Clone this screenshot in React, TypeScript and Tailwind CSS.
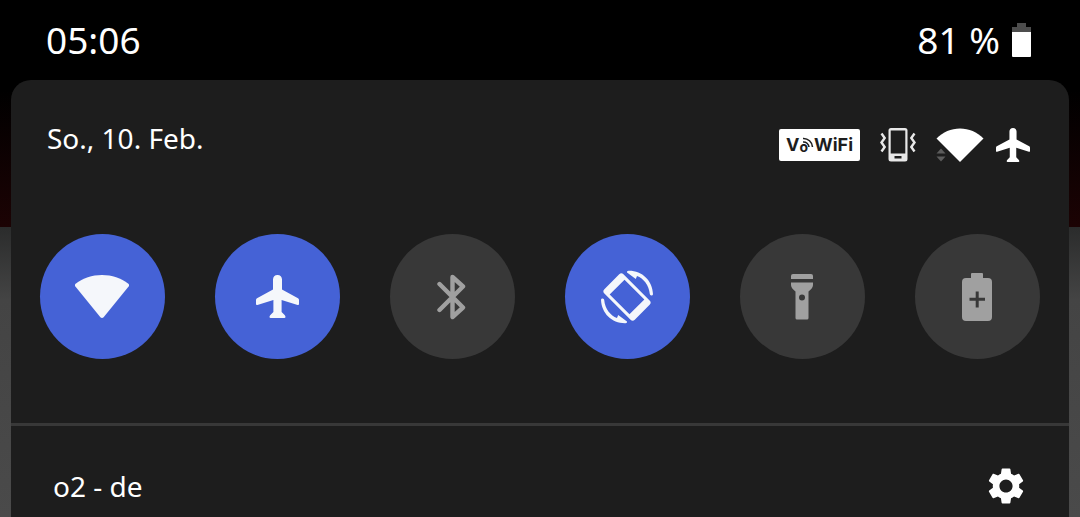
import React from 'react'
import { MdSettings } from 'react-icons/md'
import { clsx } from 'clsx'

interface IconProps {
  className?: string
}

const PlaneIcon = ({ className }: IconProps) => (
  <svg viewBox="0 0 43 43" fill="currentColor" className={className} aria-hidden="true">
    <path d="M21.5 0C24.3 0 26 2 26 4.5V14.5L42 23.2Q43 23.8 43 25V29Q43 30.4 41.6 30L25.6 25V37L28.6 40Q29.5 41 29.5 42Q29.5 43 28.3 43H14.7Q13.5 43 13.5 42Q13.5 41 14.4 40L17.4 37V25L1.4 30Q0 30.4 0 29V25Q0 23.8 1 23.2L17 14.5V4.5C17 2 18.7 0 21.5 0Z" />
  </svg>
)

const WifiIcon = ({ className }: IconProps) => (
  <svg viewBox="0 0 54 43" fill="currentColor" className={className} aria-hidden="true">
    <path d="M0.6 8.8C8 3 17 0 27 0C37 0 46 3 53.4 8.8Q54.6 10 53.6 11.4L28.6 42.2Q27 43.8 25.4 42.2L0.4 11.4Q-0.6 10 0.6 8.8Z" />
  </svg>
)

const BluetoothIcon = ({ className }: IconProps) => (
  <svg
    viewBox="0 0 30 46"
    fill="none"
    stroke="currentColor"
    strokeWidth="4.4"
    strokeLinecap="round"
    strokeLinejoin="round"
    className={className}
    aria-hidden="true"
  >
    <path d="M2.5 10L26 33.5L15.5 43V3L26 12.5L2.5 36" />
  </svg>
)

const RotateIcon = ({ className }: IconProps) => (
  <svg viewBox="0 0 54 54" fill="currentColor" className={className} aria-hidden="true">
    <path
      transform="translate(27 27) rotate(-45)"
      fillRule="evenodd"
      d="M-10.5 -21.5H10.5Q13.5 -21.5 13.5 -18.5V18.5Q13.5 21.5 10.500 21.5H-10.5Q-13.5 21.5 -13.5 18.5V-18.5Q-13.5 -21.5 -10.5 -21.5ZM-10.5 -14V14H10.5V-14Z"
    />
    <path d="M28.5 0.8C42 0.5 52.5 10.5 53 24.2Q52.8 25.7 51.3 25.6Q49.9 25.4 49.8 24C49 15 43.5 8.5 37 6L35.8 9L27 2.5Q26.5 1 28.5 0.8Z" />
    <path d="M25.5 53.2C12 53.5 1.5 43.5 1 29.8Q1.2 28.3 2.7 28.4Q4.1 28.6 4.2 30C5 39 10.5 45.5 17 48L18.2 45L27 51.5Q27.5 53 25.5 53.2Z" />
  </svg>
)

const TorchIcon = ({ className }: IconProps) => (
  <svg viewBox="0 0 22 46" fill="currentColor" className={className} aria-hidden="true">
    <path d="M2 0H20Q22 0 22 2V5H0V2Q0 0 2 0Z" />
    <path
      fillRule="evenodd"
      d="M0 8.5H22V11Q22 14 17.5 17.5V44Q17.5 45.5 16 45.5H6Q4.5 45.5 4.5 44V17.5Q0 14 0 11ZM11 20.5A3 3 0 1 0 11 26.5A3 3 0 1 0 11 20.5Z"
    />
  </svg>
)

const BatterySaverIcon = ({ className }: IconProps) => (
  <svg viewBox="0 0 30 48" fill="currentColor" className={className} aria-hidden="true">
    <path
      fillRule="evenodd"
      d="M10 0H20Q21 0 21 1V5H26Q30 5 30 9V44Q30 48 26 48H4Q0 48 0 44V9Q0 5 4 5H9V1Q9 0 10 0ZM13.7 18.5V24.7H7.5V27.7H13.7V34.5H16.7V27.7H23V24.7H16.7V18.5Z"
    />
  </svg>
)

const BatteryIcon = ({ className }: IconProps) => (
  <svg viewBox="0 0 19 34" className={className} aria-hidden="true">
    <path d="M5 0H14V4H19V9H0V4H5Z" fill="#4d4d4d" />
    <path d="M0 9H19V33Q19 34 18 34H1Q0 34 0 33Z" fill="#ffffff" />
  </svg>
)

const VibrateIcon = ({ className }: IconProps) => (
  <svg viewBox="0 0 36 34" className={className} aria-hidden="true">
    <path
      fillRule="evenodd"
      fill="#e8e8e8"
      d="M11 0H25Q27.5 0 27.5 2.5V31Q27.5 33.5 25 33.5H11Q8.5 33.5 8.5 31V2.5Q8.5 0 11 0ZM10.7 2.5V25.5H25.3V2.5ZM14.5 28V30.5H21.500V28Z"
    />
    <path
      d="M1.5 5.5L4.7 10L1.5 14.5L4.7 19L1.5 23.5M34.5 5.5L31.3 10L34.5 14.5L31.3 19L34.5 23.5"
      fill="none"
      stroke="#e8e8e8"
      strokeWidth="2.4"
    />
  </svg>
)

const SignalIcon = ({ className }: IconProps) => (
  <svg viewBox="0 0 48 34" className={className} aria-hidden="true">
    <path d="M0.5 10.5C7 4 15 0.5 24 0.5C33 0.5 41 4 47.5 10.5L24 34Z" fill="#ffffff" />
    <path d="M0.5 25.5L5 20.5L9.5 25.5ZM0.5 28.5H9.5L5 33.5Z" fill="#5c5c5c" />
  </svg>
)

const VoWifiBadge = () => (
  <span className="flex h-8 w-[81px] items-center justify-center rounded-xs bg-white font-['Inter',sans-serif] text-lg font-bold text-[#1d1d1d]">
    V
    <span className="relative pt-1 text-sm">
      o
      <svg
        viewBox="0 0 12 12"
        className="absolute top-1 left-1 size-3"
        fill="none"
        stroke="currentColor"
        strokeWidth="1.6"
        aria-hidden="true"
      >
        <path d="M0 1.5A9 9 0 0 1 9.5 10M0 5A5.5 5.5 0 0 1 6 10" />
      </svg>
    </span>
    <span className="pl-1.5">WiFi</span>
  </span>
)

const tiles = [
  { label: 'WLAN', active: true, icon: <WifiIcon className="w-[54px]" /> },
  { label: 'Flugmodus', active: true, icon: <PlaneIcon className="w-[43px]" /> },
  { label: 'Bluetooth', active: false, icon: <BluetoothIcon className="w-[30px]" /> },
  { label: 'Automatisch drehen', active: true, icon: <RotateIcon className="w-[54px]" /> },
  { label: 'Taschenlampe', active: false, icon: <TorchIcon className="w-[22px]" /> },
  { label: 'Energiesparmodus', active: false, icon: <BatterySaverIcon className="w-[30px]" /> },
]

interface TileProps {
  label: string
  active: boolean
  children: React.ReactNode
}

const Tile = ({ label, active, children }: TileProps) => (
  <button
    type="button"
    aria-label={label}
    aria-pressed={active}
    className={clsx(
      'flex size-[125px] items-center justify-center rounded-full pr-px',
      active ? 'bg-[#4562d6] text-[#f5f7fb]' : 'bg-[#383838] text-[#a0a0a0]'
    )}
  >
    {children}
  </button>
)

export default function App() {
  return (
    <main className="flex min-h-screen flex-col bg-[linear-gradient(to_bottom,#000_90px,#1c0304_227px,#2b2c2c_227px,#444_300px,#4a4a4a_100%)] font-['Noto_Sans',sans-serif] text-white">
      <header className="flex h-20 items-center justify-between bg-black pr-[49px] pl-[46px] text-[37px] leading-10">
        <time>05:06</time>
        <div className="flex items-center gap-3">
          <span>81 %</span>
          <BatteryIcon className="w-[19px]" />
        </div>
      </header>

      <section className="mx-[11px] flex flex-1 flex-col rounded-t-[20px] bg-[#1d1d1d]">
        <div className="flex items-start justify-between pt-10 pr-[39px] pl-9">
          <p className="text-[28px] leading-9">So., 10. Feb.</p>
          <div className="flex items-center gap-5 pt-2">
            <VoWifiBadge />
            <VibrateIcon className="w-9" />
            <div className="flex items-center gap-3">
              <SignalIcon className="w-12" />
              <PlaneIcon className="w-[34px]" />
            </div>
          </div>
        </div>

        <div className="flex justify-between px-[29px] pt-[72px] pb-16">
          {tiles.map(({ label, active, icon }) => (
            <Tile key={label} label={label} active={active}>
              {icon}
            </Tile>
          ))}
        </div>

        <footer className="flex flex-1 items-center justify-between border-t-3 border-[#383838] pt-7 pr-[41px] pl-[42px]">
          <span className="text-[28px] leading-9">o2 - de</span>
          <button type="button" aria-label="Einstellungen">
            <MdSettings className="size-11" />
          </button>
        </footer>
      </section>
    </main>
  )
}
